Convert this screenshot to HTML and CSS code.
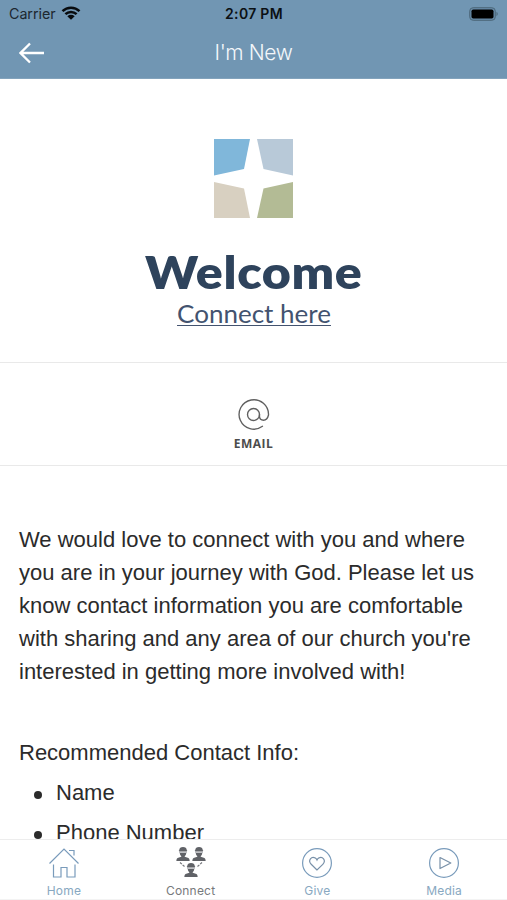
FILE: index.html
```html
<!DOCTYPE html>
<html lang="en">
<head>
<meta charset="utf-8">
<title>I'm New</title>
<link rel="stylesheet" href="styles.css">
</head>
<body>
<div class="app">
  <header class="top">
    <div class="status">
      <div class="carrier"><span class="carrier-name">Carrier</span>
        <svg class="wifi" width="20" height="14" viewBox="0 0 20 14"><path d="M1.5 5.2A12.2 12.2 0 0 1 18.500 5.200M4.400 8.200A8 8 0 0 1 15.600 8.200" fill="none" stroke="#080b0e" stroke-width="2.500"/><path d="M6.300 10.200Q10 7.300 13.700 10.200L10 13.800Z" fill="#080b0e"/></svg>
      </div>
      <div class="clock">2:07 PM</div>
      <svg class="battery" width="30" height="14" viewBox="0 0 30 14"><rect x=".7" y=".7" width="25.600" height="12.600" rx="3.500" fill="#678ba8" stroke="#4c6779" stroke-width="1"/><rect x="2.500" y="2.500" width="22" height="9" rx="1.800" fill="#000"/><path d="M27.500 4.800Q30 7 27.500 9.200Z" fill="#4c6779"/></svg>
    </div>
    <div class="nav">
      <svg class="back" width="26" height="22" viewBox="0 0 26 22"><path d="M11 1.500L1.500 11L11 20.500M1.500 11H25" fill="none" stroke="#fff" stroke-width="2.300"/></svg>
      <h1 class="title">I'm New</h1>
      <span></span>
    </div>
  </header>
  <main class="content">
    <section class="hero">
      <svg class="logo" width="79" height="79" viewBox="0 0 79 79"><path fill="#80b7da" d="M0 0H36L30 30L0 36.500Z"/><path fill="#b8c9d8" d="M43 0H79V36.500L49.500 30Z"/><path fill="#d8d0c1" d="M0 43L30 49.500L36 79H0Z"/><path fill="#b3bb95" d="M79 43V79H43L49.500 49.500Z"/></svg>
      <h2 class="welcome">Welcome</h2>
      <a class="connect-link">Connect here</a>
    </section>
    <section class="email">
      <svg width="32" height="32" viewBox="0 0 32 32"><g fill="none" stroke="#606060" stroke-width="1.350"><circle cx="15.500" cy="15.500" r="6"/><path d="M21.500 15.500V17.500Q21.700 21.200 25.500 21.200T30.500 16A14.700 14.700 0 1 0 24.500 27.300" stroke-linecap="round"/></g></svg>
      <span class="email-label">EMAIL</span>
    </section>
    <section class="copy">
      <p class="intro">We would love to connect with you and where<br>you are in your journey with God. Please let us<br>know contact information you are comfortable<br>with sharing and any area of our church you're<br>interested in getting more involved with!</p>
      <p class="recommended">Recommended Contact Info:</p>
      <ul class="fields"><li><span class="f1">Name</span></li><li><span class="f2">Phone Number</span></li></ul>
    </section>
  </main>
  <nav class="tabs">
    <div class="tab"><svg width="32" height="32" viewBox="0 0 32 32"><path d="M1.500 16.500L16 2L30.500 16.500M21 3.500H26V8.500M5.500 17.500V30H13V20.500H19V30H27V17.500" fill="none" stroke="#799bbb" stroke-width="1.200"/></svg><span class="t-home">Home</span></div>
    <div class="tab active"><svg width="32" height="32" viewBox="0 0 32 32">
      <defs><g id="person"><path fill="#606267" d="M3.200 3.300Q3.500 0 7 0T10.800 3.300L11.300 3.700L10.700 4.500H3.300L2.700 3.700ZM3.700 6.100H10.300Q10 8.400 8.700 9.200V9.800L12.500 11Q13.500 11.500 13.700 14H.3Q.5 11.500 1.500 11L5.300 9.800V9.200Q4 8.400 3.700 6.100Z"/><path d="M3 5.200H11" stroke="#9a9ca1" stroke-width=".9"/></g></defs>
      <use href="#person" x="1" y="0"/><use href="#person" x="17" y="0"/><use href="#person" x="9" y="16"/><path d="M5 15.500L9.500 19.500M27 15.500L22.500 19.500" stroke="#73757a" stroke-width="1.200" stroke-dasharray="2.500 1"/></svg><span class="t-connect">Connect</span></div>
    <div class="tab"><svg width="32" height="32" viewBox="0 0 32 32"><g fill="none" stroke="#799bbb" stroke-width="1.200"><circle cx="16" cy="16" r="14.400"/><path stroke="#7890a8" d="M16 23L10.200 17.300C6.500 13.500 10.500 8.800 14.300 11.100Q15.500 11.900 16 13Q16.500 11.900 17.700 11.100C21.500 8.800 25.500 13.500 21.800 17.300Z"/></g></svg><span class="t-give">Give</span></div>
    <div class="tab"><svg width="32" height="32" viewBox="0 0 32 32"><g fill="none" stroke="#799bbb" stroke-width="1.200"><circle cx="16" cy="16" r="14.400"/><path stroke="#7890a8" stroke-linejoin="round" d="M12 10.500L22.800 16L12 21.500Z"/></g></svg><span class="t-media">Media</span></div>
  </nav>
</div>
</body>
</html>
```
FILE: styles.css
```css
* { box-sizing: border-box; margin: 0; padding: 0; }
body { background: #fff; overflow: hidden; }
.app { width: 507px; height: 900px; display: flex; flex-direction: column; font-family: "Liberation Sans", sans-serif; overflow: hidden; }
.top { height: 79px; flex: none; background: #7196b3; border-bottom: 1px solid #83a3bc; }
.status { height: 27px; display: grid; grid-template-columns: 1fr auto 1fr; align-items: center; padding: 0 8px 0 9px; font: 14.3px/18px Inter, sans-serif; color: #0b1014; }
.carrier { display: flex; align-items: center; gap: 5px; }
.carrier-name { color: #1c272f; letter-spacing: -.05px; padding-top: 1px; }
.wifi { margin-top: -1px; }
.clock { font-weight: 600; font-size: 14px; letter-spacing: .3px; padding-top: 1px; }
.battery { justify-self: end; }
.nav { height: 51px; display: grid; grid-template-columns: 1fr auto 1fr; align-items: center; padding: 0 19px; }
.title { font: 300 21px/28px Inter, sans-serif; letter-spacing: -.4px; color: #f3f7fa; }
.content { flex: 1; min-height: 0; overflow: hidden; }
.hero { height: 284px; border-bottom: 1px solid #e9e9e9; padding-top: 60px; display: flex; flex-direction: column; align-items: center; color: #2e435c; }
.welcome { font: 800 46px/54px Lato, sans-serif; letter-spacing: .6px; margin-top: 27px; white-space: nowrap; transform: scaleX(1.09); }
.connect-link { font: 25px/30px Lato, sans-serif; color: #43536f; border-bottom: 1px solid #43536f; height: 28px; margin-top: -1px; white-space: nowrap; transform: scaleX(1.04); }
.email { height: 103px; border-bottom: 1px solid #e9e9e9; padding-top: 36px; display: flex; flex-direction: column; align-items: center; }
.email-label { font: 700 12px/16px "Open Sans", sans-serif; letter-spacing: .5px; color: #4c4c4c; margin-top: 5px; }
.copy { padding: 57px 19px 0; font-size: 22px; line-height: 33px; color: #2b2b2b; white-space: nowrap; }
.recommended { margin-top: 48px; }
.fields { list-style: none; margin-top: 4px; }
.fields li { height: 40px; line-height: 40px; padding-left: 15px; display: flex; align-items: center; gap: 14px; }
.fields li::before { content: ""; width: 8px; height: 8px; border-radius: 50%; background: #2b2b2b; margin-top: 3px; }
.tabs { height: 61px; flex: none; background: #fff; border-top: 1px solid #ededed; border-bottom: 1px solid #f3f3f3; display: grid; grid-template-columns: repeat(4, 1fr); }
.tab { display: flex; flex-direction: column; align-items: center; padding: 7px 0 0 1px; font: 12px/16px Inter, sans-serif; letter-spacing: .2px; color: #88a8c1; }
.tab span { margin-top: 4px; }
.tab.active { color: #77797c; }
```
